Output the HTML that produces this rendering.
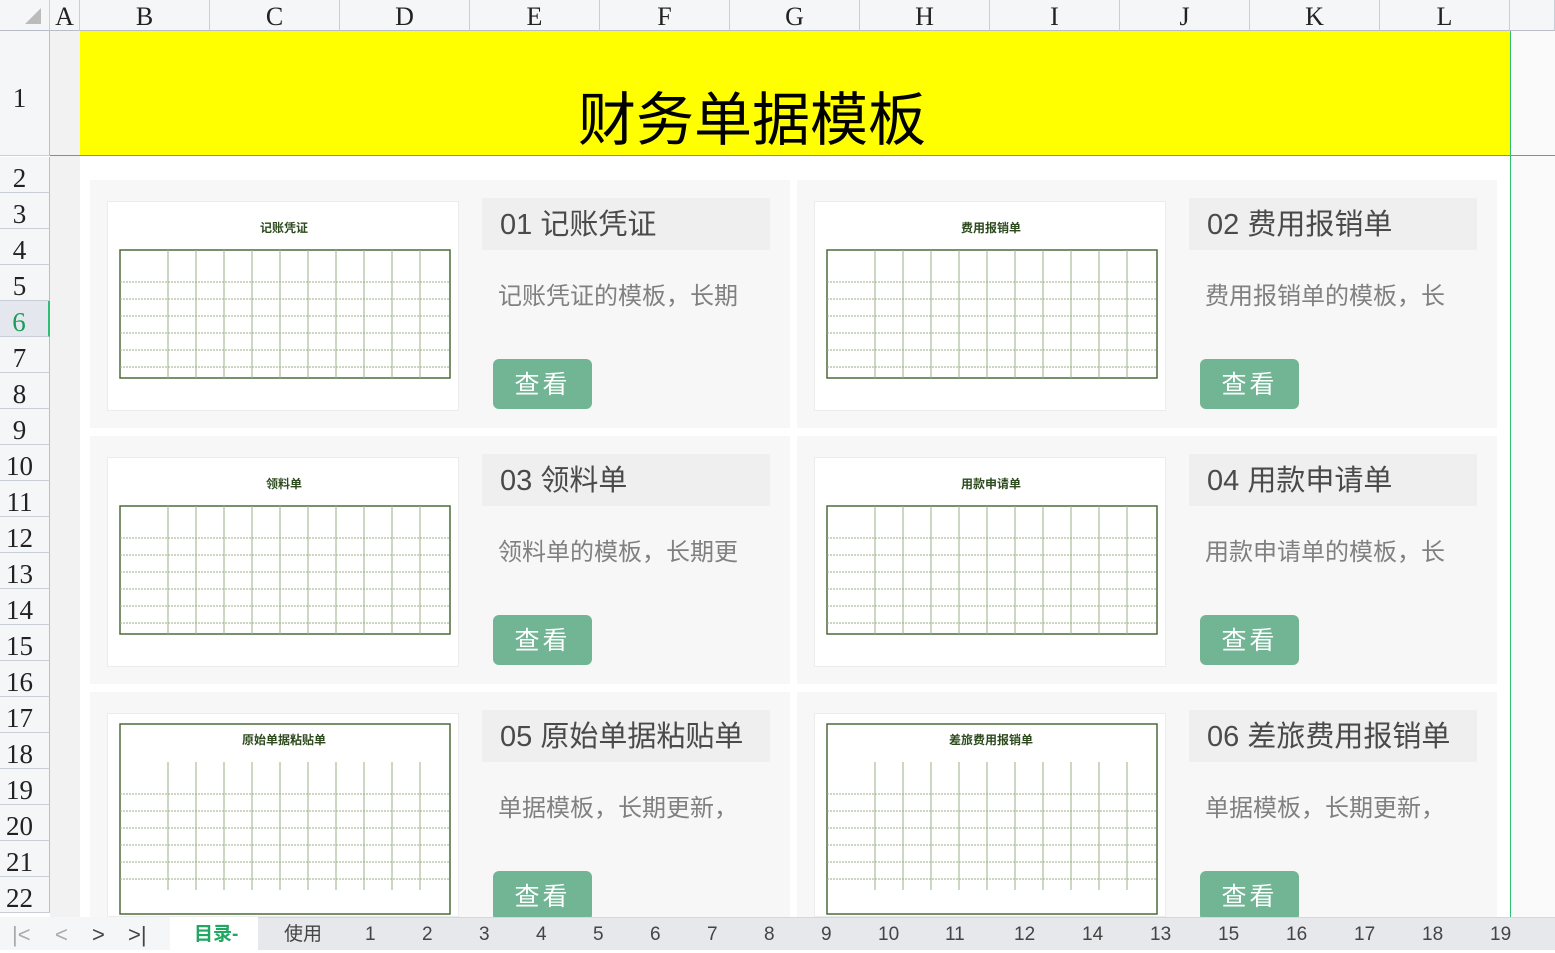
<!DOCTYPE html>
<html><head><meta charset="utf-8"><style>
*{margin:0;padding:0;box-sizing:border-box}
body{width:1555px;height:950px;overflow:hidden;background:#fff;font-family:"Liberation Sans","Noto Sans CJK SC",sans-serif;position:relative}
.abs{position:absolute}
.colh{top:0;height:31px;background:#f5f6f8;border-right:1px solid #c9cdd6;border-bottom:1px solid #b8bdc8;font-family:"Liberation Serif","Noto Serif CJK SC",serif;font-size:26px;color:#222;text-align:center;line-height:33px}
.rowh{left:0;width:50px;background:#f5f6f8;border-right:1px solid #b8bdc8;border-bottom:1px solid #c9cdd6;font-family:"Liberation Serif",serif;font-size:27px;color:#222;text-align:center;padding-right:10px}
.card{background:#f7f7f7;width:700px;height:248px}
.img{background:#fff;border:1px solid #ececec;width:352px;height:210px}
.tt{background:#efefef;width:288px;height:52px;font-size:29px;color:#4a4a4a;padding-left:18px;line-height:54px}
.ds{font-size:24px;color:#808080;white-space:nowrap}
.bt{background:#72b595;color:#fff;width:99px;height:50px;border-radius:6px;font-size:25px;text-align:center;line-height:52px;letter-spacing:3px}
.tab{top:917px;height:33px;font-size:19px;color:#444;line-height:36px}
</style></head><body>
<div class="abs" style="left:50px;top:31px;width:30px;height:886px;background:#f2f2f2"></div>
<div class="abs" style="left:1510px;top:31px;width:45px;height:886px;background:#fafafa"></div>
<div class="abs" style="left:80px;top:31px;width:1430px;height:125px;background:#ff0"></div>
<div class="abs" style="left:578px;top:80px;font-size:58px;line-height:70px;color:#000;font-family:'Noto Sans CJK SC',sans-serif;white-space:nowrap">财务单据模板</div>
<div class="abs" style="left:0;top:155px;width:1555px;height:1px;background:#2fbf71"></div>
<div class="abs" style="left:1510px;top:0;width:1px;height:917px;background:#2fbf71"></div>
<div class="abs colh" style="left:0;width:50px;background:#f5f6f8"><div class="abs" style="right:8px;top:8px;width:0;height:0;border-left:16px solid transparent;border-bottom:16px solid #bbb"></div></div>
<div class="abs colh" style="left:50px;width:30px">A</div>
<div class="abs colh" style="left:80px;width:130px">B</div>
<div class="abs colh" style="left:210px;width:130px">C</div>
<div class="abs colh" style="left:340px;width:130px">D</div>
<div class="abs colh" style="left:470px;width:130px">E</div>
<div class="abs colh" style="left:600px;width:130px">F</div>
<div class="abs colh" style="left:730px;width:130px">G</div>
<div class="abs colh" style="left:860px;width:130px">H</div>
<div class="abs colh" style="left:990px;width:130px">I</div>
<div class="abs colh" style="left:1120px;width:130px">J</div>
<div class="abs colh" style="left:1250px;width:130px">K</div>
<div class="abs colh" style="left:1380px;width:130px">L</div>
<div class="abs colh" style="left:1510px;width:45px"></div>
<div class="abs rowh" style="top:31px;height:125px;line-height:134px">1</div>
<div id="rows"></div>
<script>
var h='';for(var r=2;r<=22;r++){var t=157+(r-2)*36;h+='<div class="abs rowh" style="top:'+t+'px;height:36px;line-height:42px;'+(r==6?'color:#1a9c5b;background:#e4e8ee;border-right:2px solid #2fbf71':'')+'">'+r+'</div>';}document.getElementById('rows').innerHTML=h;
</script>
<div id="cards"></div>
<script>
var data=[["01 记账凭证","记账凭证的模板，长期"],["02 费用报销单","费用报销单的模板，长"],["03 领料单","领料单的模板，长期更"],["04 用款申请单","用款申请单的模板，长"],["05 原始单据粘贴单","单据模板，长期更新，"],["06 差旅费用报销单","单据模板，长期更新，"]];
var hh='';
for(var i=0;i<6;i++){var col=i%2,row=Math.floor(i/2);var x=90+col*707,y=180+row*256;
var ch=(row==2)?(917-y):248;
hh+='<div class="abs card" style="left:'+x+'px;top:'+y+'px;height:'+ch+'px;overflow:hidden">';
hh+='<div class="abs img" style="left:17px;top:21px;height:'+Math.min(210,ch-21)+'px"><svg width="352" height="210" style="position:absolute;left:0;top:0"><g stroke="#4d6b3a" fill="none" stroke-width="1">';
hh+='<rect x="12" y="'+(row==2?10:48)+'" width="330" height="'+(row==2?190:128)+'" stroke-width="1.5"/>';
for(var k=0;k<6;k++){hh+='<line x1="12" x2="342" y1="'+(80+k*17)+'" y2="'+(80+k*17)+'" stroke="#9ab08a" stroke-dasharray="2 1"/>';}
for(var k=0;k<10;k++){hh+='<line y1="48" y2="176" x1="'+(60+k*28)+'" x2="'+(60+k*28)+'" stroke="#9ab08a"/>';}
hh+='</g><text x="176" y="30" font-size="12" font-weight="bold" fill="#2d4a1e" text-anchor="middle" font-family="Noto Sans CJK SC">'+data[i][0].slice(3)+'</text></svg></div>';
hh+='<div class="abs tt" style="left:392px;top:18px">'+data[i][0]+'</div>';
hh+='<div class="abs ds" style="left:408px;top:96px">'+data[i][1]+'</div>';
hh+='<div class="abs bt" style="left:403px;top:179px">查看</div></div>';}
document.getElementById('cards').innerHTML=hh;
</script>
<div class="abs" style="left:0;top:917px;width:1555px;height:33px;background:#e6e8ec;border-top:1px solid #d4d7dd"></div>
<div class="abs" style="left:0;top:917px;width:170px;height:33px;background:#f5f6f8"></div>
<div class="abs tab" style="left:12px;color:#aaa;font-size:22px">|&lt;</div>
<div class="abs tab" style="left:55px;color:#aaa;font-size:22px">&lt;</div>
<div class="abs tab" style="left:92px;font-size:22px">&gt;</div>
<div class="abs tab" style="left:128px;font-size:22px">&gt;|</div>
<div class="abs" style="left:170px;top:917px;width:88px;height:33px;background:#fff"></div>
<div class="abs tab" style="left:194px;color:#1fa862;font-weight:bold">目录-</div>
<div class="abs tab" style="left:284px">使用</div>
<div id="tabs"></div>
<script>
var n=["1","2","3","4","5","6","7","8","9","10","11","12","14","13","15","16","17","18","19"];
var p=[371,428,485,542,599,656,713,770,827,890,957,1026,1094,1162,1230,1298,1366,1434,1502];
var s='';for(var i=0;i<n.length;i++)s+='<div class="abs tab" style="left:'+(p[i]-6*n[i].length)+'px">'+n[i]+'</div>';document.getElementById('tabs').innerHTML=s;
</script>
</body></html>
